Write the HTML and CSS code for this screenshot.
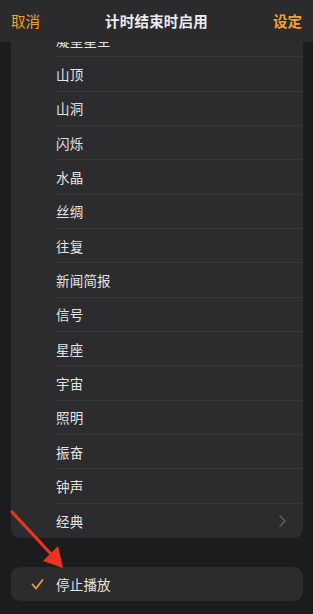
FILE: index.html
```html
<!DOCTYPE html>
<html lang="zh">
<head>
<meta charset="utf-8">
<link rel="stylesheet" href="styles.css">
</head>
<body>
<div class="screen">
  <main class="content">
    <section class="card">
      <div class="row"><span class="label">凝望星空</span></div>
      <div class="row"><span class="label">山顶</span></div>
      <div class="row"><span class="label">山洞</span></div>
      <div class="row"><span class="label">闪烁</span></div>
      <div class="row"><span class="label">水晶</span></div>
      <div class="row"><span class="label">丝绸</span></div>
      <div class="row"><span class="label">往复</span></div>
      <div class="row"><span class="label">新闻简报</span></div>
      <div class="row"><span class="label">信号</span></div>
      <div class="row"><span class="label">星座</span></div>
      <div class="row"><span class="label">宇宙</span></div>
      <div class="row"><span class="label">照明</span></div>
      <div class="row"><span class="label">振奋</span></div>
      <div class="row"><span class="label">钟声</span></div>
      <div class="row last"><span class="label">经典</span>
        <svg class="chevron" width="7" height="12" viewBox="0 0 7 12"><path d="M1 1l5 5-5 5" fill="none" stroke="#5c5c60" stroke-width="1.6" stroke-linecap="round" stroke-linejoin="round"/></svg>
      </div>
    </section>
    <section class="card card-stop">
      <div class="row last">
        <svg class="check" width="13" height="11" viewBox="0 0 13 11"><path d="M1.5 5.5l3.5 4 6.5-8.5" fill="none" stroke="#f0a22c" stroke-width="1.8" stroke-linecap="round" stroke-linejoin="round"/></svg>
        <span class="label">停止播放</span>
      </div>
    </section>
  </main>
  <header class="navbar">
    <span class="nav-btn">取消</span>
    <span class="nav-title">计时结束时启用</span>
    <span class="nav-btn strong">设定</span>
  </header>
  <svg class="arrow" width="313" height="614" viewBox="0 0 313 614">
    <line x1="12" y1="512" x2="51" y2="554" stroke="#ec3220" stroke-width="3.2" stroke-linecap="round"/>
    <polygon points="43,561 58,546 63,568" fill="#ec3220"/>
  </svg>
</div>
</body>
</html>
```
FILE: styles.css
```css
* { box-sizing: border-box; }
html, body {
  margin: 0;
  padding: 0;
  background: #1c1c1e;
}
.screen {
  position: relative;
  width: 313px;
  height: 614px;
  overflow: hidden;
  background: #1c1c1e;
  font-family: "Noto Sans CJK SC", "Noto Sans", sans-serif;
}
.content {
  display: flex;
  flex-direction: column;
  gap: 29px;
  padding: 23px 10px 0 11px;
}
.card {
  background: #2c2c2e;
  border-radius: 9px;
  overflow: hidden;
}
.row {
  position: relative;
  display: flex;
  align-items: center;
  height: 34.33px;
  margin-left: 45px;
  padding-right: 17px;
  border-bottom: 1px solid #38383a;
}
.row.last { border-bottom: none; }
.card-stop .row { height: 34px; }
.label {
  flex: 1;
  font-size: 13.5px;
  color: #e4e4e6;
  letter-spacing: 0.2px;
}
.chevron { flex: none; }
.check {
  position: absolute;
  left: -25px;
  top: 12px;
}
.navbar {
  position: absolute;
  left: 0;
  top: 0;
  width: 313px;
  height: 42px;
  background: #2b2b2d;
  display: flex;
  align-items: center;
  justify-content: space-between;
  padding: 0 11px 2px 11px;
}
.nav-btn {
  font-size: 14.5px;
  color: #f0a22c;
}
.nav-btn.strong { font-weight: 700; }
.nav-title {
  font-size: 14.5px;
  font-weight: 700;
  color: #ececee;
  letter-spacing: 0.2px;
}
.arrow {
  position: absolute;
  left: 0;
  top: 0;
  pointer-events: none;
}
```
